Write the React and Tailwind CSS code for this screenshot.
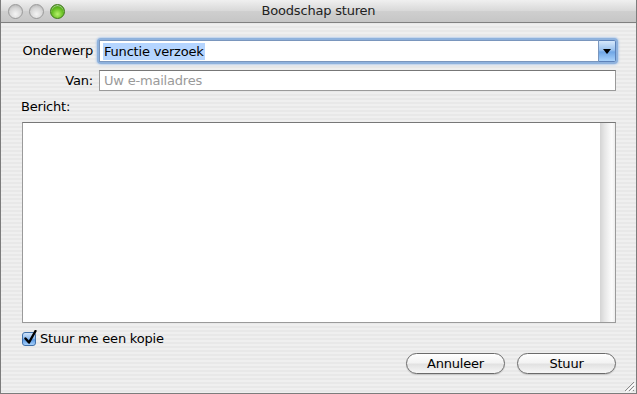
import React from 'react';

const font = { fontFamily: '"DejaVu Sans", "Lucida Grande", sans-serif' };

const TrafficLight = ({ green }) => (
  <div
    className={
      green
        ? 'shrink-0 w-[15px] h-[15px] rounded-full border border-[#3d7a14] bg-[radial-gradient(circle_at_50%_70%,#b6f26a_0%,#5fb91c_55%,#2f7a0a_100%)] shadow-[inset_0_1px_1px_rgba(255,255,255,0.6)]'
        : 'shrink-0 w-[15px] h-[15px] rounded-full border border-[#9a9a9a] bg-[radial-gradient(circle_at_50%_70%,#f4f4f4_0%,#d6d6d6_55%,#a9a9a9_100%)]'
    }
  />
);

const AquaButton = ({ children }) => (
  <button className="w-[99px] h-[21px] rounded-full border border-[#6b6b6b] bg-[linear-gradient(#ffffff,#f3f3f3_45%,#e2e2e2_55%,#f7f7f7)] text-[13px] text-black leading-none shadow-[0_1px_1px_rgba(0,0,0,0.15)]">
    {children}
  </button>
);

export default function App() {
  return (
    <div style={font} className="w-[637px] h-[394px] flex flex-col overflow-hidden border-x border-b border-[#7c7c7c] bg-[repeating-linear-gradient(#efefef_0px,#efefef_2px,#e8e8e8_2px,#e8e8e8_4px)] text-black tracking-[-0.2px]">
      {/* Title bar */}
      <div className="relative h-[23px] shrink-0 flex items-center px-[7px] gap-[6px] border-b border-[#808080] bg-[linear-gradient(#f0f0f0,#d8d8d8_50%,#cfcfcf_51%,#c6c6c6)]">
        <TrafficLight />
        <TrafficLight />
        <TrafficLight green />
        <div className="absolute inset-0 flex items-center justify-center text-[13px] text-[#222]">
          Boodschap sturen
        </div>
      </div>

      {/* Body */}
      <div className="flex flex-col pl-[20px] pr-[20px] pt-[17px]">
        <div className="flex items-center h-[22px]">
          <div className="w-[78px] pr-[6px] text-right text-[13px]">Onderwerp</div>
          <div className="flex-1 flex h-[22px] rounded-[2px] shadow-[0_0_0_2px_#8fb2dd,0_0_2px_3px_#b9cfea]">
            <div className="flex-1 flex items-center bg-white border border-[#7a96bd] pl-[3px]">
              <span className="bg-[#b5d5ff] text-[13px] leading-[17px] px-[1px]">Functie verzoek</span>
            </div>
            <div className="w-[17px] flex items-center justify-center border border-l-0 border-[#5d82b9] rounded-r-[2px] bg-[linear-gradient(#d6e8fb,#9cc3ef_45%,#6fa6e6_55%,#a9d2fb)]">
              <div className="w-0 h-0 border-x-[4px] border-x-transparent border-t-[5px] border-t-black" />
            </div>
          </div>
        </div>

        <div className="flex items-center h-[21px] mt-[8px]">
          <div className="w-[78px] pr-[6px] text-right text-[13px]">Van:</div>
          <div className="flex-1 h-[21px] flex items-center bg-white border border-[#9a9a9a] border-t-[#777] pl-[4px] text-[13px] text-[#9a9a9a]">
            Uw e-mailadres
          </div>
        </div>

        <div className="mt-[7px] h-[18px] flex items-center text-[13px]">Bericht:</div>

        <div className="mt-[6px] ml-[1px] h-[201px] shrink-0 flex bg-white border border-[#9a9a9a] border-t-[#777]">
          <div className="flex-1" />
          <div className="w-[15px] bg-[linear-gradient(90deg,#d4d4d4,#e6e6e6_30%,#f4f4f4_60%,#fcfcfc_80%,#eeeeee)]" />
        </div>

        <div className="mt-[8px] ml-[1px] flex items-center gap-[4px] h-[15px]">
          <div className="relative shrink-0 w-[14px] h-[14px] rounded-[3px] border border-[#3f6fa8] bg-[linear-gradient(#cfe3fa,#87b7ee_50%,#5a98e2_55%,#a6d0fb)]">
            <svg className="absolute -top-[3px] left-[1px]" width="13" height="15" viewBox="0 0 13 15">
              <path d="M1.5 8.5 L5 12.5 L11.5 1" fill="none" stroke="#000" strokeWidth="2.4" strokeLinecap="round" strokeLinejoin="round" />
            </svg>
          </div>
          <span className="text-[13px]">Stuur me een kopie</span>
        </div>

        <div className="mt-[7px] flex justify-end gap-[12px]">
          <AquaButton>Annuleer</AquaButton>
          <AquaButton>Stuur</AquaButton>
        </div>
      </div>

      {/* Resize grip */}
      <div className="relative flex-1">
        <svg className="absolute right-[1px] bottom-[1px]" width="12" height="12" viewBox="0 0 12 12">
          <path d="M11 2 L2 11 M11 6 L6 11 M11 10 L10 11" stroke="#8a8a8a" strokeWidth="1" />
          <path d="M12 3 L3 12 M12 7 L7 12" stroke="#ffffff" strokeWidth="1" />
        </svg>
      </div>
    </div>
  );
}
